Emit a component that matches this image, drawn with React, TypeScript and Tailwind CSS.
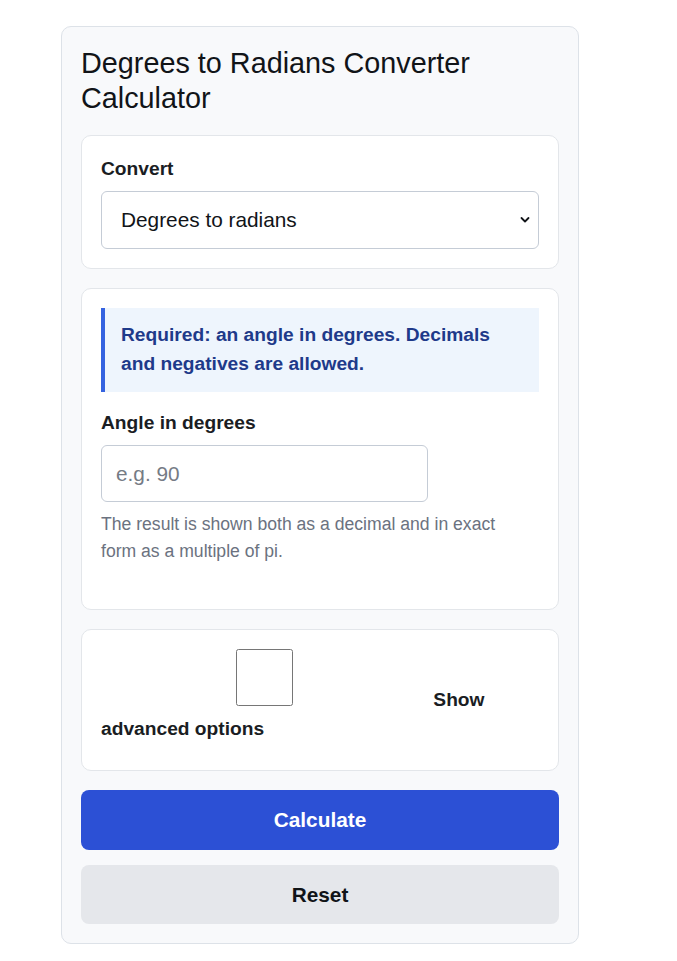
const App = () => {
    return (
        <div className="min-h-screen bg-white pt-[26px] pl-[61px] pb-[16px]"
             style={{ fontFamily: '"Liberation Sans", Arial, sans-serif' }}>
            <div className="w-[518px] bg-[#f8f9fb] border border-[#dde2e8] rounded-[10px] p-[19px] text-[#1a1d23]">
                <h1 className="text-[28.8px] leading-[34.5px] font-normal text-[#111418] mb-[20px]">
                    Degrees to Radians Converter Calculator
                </h1>

                {/* convert direction */}
                <div className="bg-white border border-[#e3e6ea] rounded-[10px] p-[19px]">
                    <label className="block text-[19.2px] leading-[28px] font-bold mb-[8px]">
                        Convert
                    </label>
                    <div className="relative">
                        <select className="w-full h-[58px] appearance-none bg-white border border-[#c5ccd6]
                                           rounded-[6px] px-[19px] text-[20.8px] text-[#111418] outline-none">
                            <option>Degrees to radians</option>
                            <option>Radians to degrees</option>
                        </select>
                        <svg className="absolute right-[8px] top-[24px] pointer-events-none" width="12" height="10"
                             viewBox="0 0 12 10" fill="none">
                            <path d="M2.5 3l3.5 3.5 3.5-3.5" stroke="#111418" strokeWidth="1.8" strokeLinecap="round"
                                  strokeLinejoin="round" />
                        </svg>
                    </div>
                </div>

                {/* angle input */}
                <div className="mt-[19px] bg-white border border-[#e3e6ea] rounded-[10px] pt-[19px] px-[19px] pb-[45px]">
                    <div className="bg-[#eef5fd] border-l-[4px] border-[#3563e0] pl-[16px] pr-[16px] py-[13.3px]
                                    text-[19.2px] leading-[28.8px] font-bold text-[#1e3a8a]">
                        Required: an angle in degrees. Decimals and negatives are allowed.
                    </div>
                    <label className="block mt-[18px] text-[19.2px] leading-[26px] font-bold mb-[9px]">
                        Angle in degrees
                    </label>
                    <input type="text" placeholder="e.g. 90"
                           className="w-[327px] h-[57px] border border-[#c5ccd6] rounded-[6px] px-[14px]
                                      text-[20.8px] text-[#111418] placeholder:text-[#757b85] outline-none" />
                    <p className="mt-[9px] pr-[16px] text-[17.6px] leading-[26.4px] text-[#6b7280]">
                        The result is shown both as a decimal and in exact form as a multiple of pi.
                    </p>
                </div>

                {/* advanced toggle */}
                <div className="mt-[19px] bg-white border border-[#e3e6ea] rounded-[10px] p-[19px] pb-[26px]">
                    <label className="block text-[19.2px] leading-[28.8px] font-bold">
                        <input type="checkbox" className="w-[327px] h-[57px] align-baseline" /> Show advanced options
                    </label>
                </div>

                <button className="mt-[19px] w-full h-[60px] rounded-[8px] bg-[#2c50d5] text-white text-[20.8px] font-bold">
                    Calculate
                </button>
                <button className="mt-[15px] w-full h-[59px] rounded-[8px] bg-[#e5e7eb] text-[#111418] text-[20.8px] font-bold">
                    Reset
                </button>
            </div>
        </div>
    );
};

export default App;
